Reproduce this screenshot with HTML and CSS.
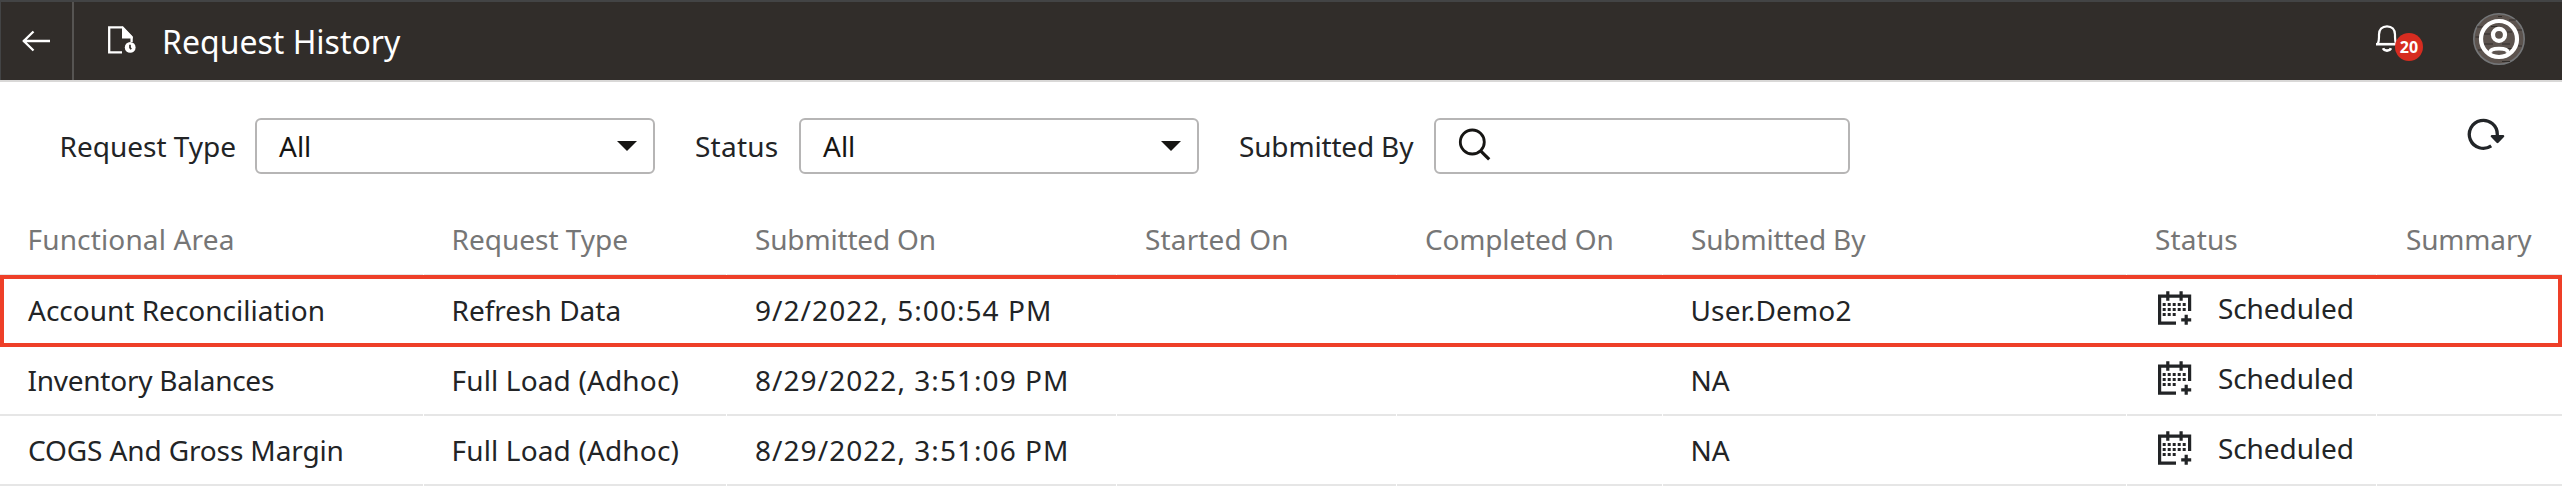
FILE: index.html
```html
<!DOCTYPE html>
<html lang="en">
<head>
<meta charset="utf-8">
<title>Request History</title>
<link rel="stylesheet" href="styles.css">
</head>
<body>
<svg width="0" height="0" class="defs" aria-hidden="true">
  <symbol id="calendar" viewBox="18 13 34 34">
    <g fill="none" stroke="currentColor" stroke-width="3.2">
      <path d="M36 45.2H19.6V18.2H49.6V33"/>
      <path d="M27.8 13.2v9.6M41.1 13.2v9.6"/>
      <path d="M46.2 36.8v10M41.2 41.8h10"/>
      <path stroke-width="3" stroke-dasharray="3 2" d="M22.7 26.5h23M22.7 31.5h23M22.7 36.5h13"/>
    </g>
  </symbol>
</svg>
<header class="topbar">
  <div class="back">
    <svg width="30" height="24" viewBox="0 0 30 24" fill="none" stroke="#fff" stroke-width="2.3"><path d="M29 12H2M12.5 2.5L2.8 12l9.7 9.5"/></svg>
  </div>
  <svg class="page-icon" width="30" height="30" viewBox="0 0 30 30">
    <path d="M15 27.3H2.2V2.4H15.500L24.6 12v5" fill="none" stroke="#fff" stroke-width="2.3"/>
    <path d="M15 1.300L25.700 12v1.500H15z" fill="#fff"/>
    <circle cx="23.200" cy="22.400" r="5.400" fill="#fff"/>
    <path d="M23 19.800v2.800l1.200 1.600" fill="none" stroke="#312d2a" stroke-width="1.700"/>
  </svg>
  <h1 class="title">Request History</h1>
  <div class="bell">
    <svg width="24" height="30" viewBox="0 0 24 30" fill="none" stroke="#fff" stroke-width="2.2">
      <path d="M1 20.200h22" stroke-width="2.600"/>
      <path d="M3 19.500c.8-2.200 1-3.800 1-6.500v-2.500C4 5.500 7 2.300 12 2.300s8 3.200 8 8.200V13c0 2.700.2 4.300 1 6.500"/>
      <path d="M8 24.300c.7 1.500 2.200 2.300 4 2.300s3.300-.8 4-2.300" stroke-width="2.600"/>
    </svg>
    <span class="badge">20</span>
  </div>
  <svg class="avatar" width="52" height="52" viewBox="0 0 52 52">
    <circle cx="26" cy="26" r="25.200" fill="#5c534e" stroke="#747678" stroke-width="1.600"/>
    <path d="M25 3.500h4M36 7h7M4 14h6M2.500 24h5M43 17h6M44 33h5M5 37h4M29 48.500h8M18 13.500h6M10 21h7M33 19h6M10 31h10M29 31h8M34 35.500h6" stroke="#312d2a" stroke-width="1.200"/>
    <g fill="none" stroke="#fff">
      <circle cx="26" cy="26" r="18" stroke-width="4.200"/>
      <circle cx="26" cy="21.800" r="6" stroke-width="4.200"/>
      <path d="M17.500 40c-.8-3.200 2.200-4.400 8.500-4.400s9.300 1.200 8.500 4.400" stroke-width="3.800"/>
    </g>
  </svg>
</header>

<section class="filters">
  <label class="label w-type">Request Type</label>
  <div class="box select">All<i class="caret"></i></div>
  <label class="label w-status">Status</label>
  <div class="box select">All<i class="caret"></i></div>
  <label class="label w-by tight">Submitted By</label>
  <div class="box search">
    <svg width="36" height="36" viewBox="0 0 36 36" fill="none" stroke="#161513" stroke-width="2.800"><circle cx="15.300" cy="15" r="12"/><path d="M23.600 23.800l8.600 8.600" stroke-width="3.200"/></svg>
  </div>
  <svg class="refresh" width="40" height="36" viewBox="0 0 40 36">
    <path d="M24.200 28.900A14 14 0 1 1 30.300 17.500V22" fill="none" stroke="#222528" stroke-width="3.300"/>
    <path d="M25 19.200l5.500 5.600 5.500-5.600z" fill="#222528" stroke="#222528" stroke-width="2.600" stroke-linejoin="round"/>
  </svg>
</section>

<main class="table">
  <div class="row head">
    <div class="cell stem wide">Functional Area</div><div class="cell stem">Request Type</div><div class="cell tight">Submitted On</div><div class="cell wide">Started On</div><div class="cell tight">Completed On</div><div class="cell tight">Submitted By</div><div class="cell wide">Status</div><div class="cell tight last">Summary</div>
  </div>
  <div class="row selected">
    <div class="cell">Account Reconciliation</div><div class="cell stem">Refresh Data</div><div class="cell date">9/2/2022, 5:00:54 PM</div><div class="cell"></div><div class="cell"></div><div class="cell stem wide">User.Demo2</div><div class="cell status"><svg width="34" height="34"><use href="#calendar"/></svg>Scheduled</div><div class="cell"></div>
  </div>
  <div class="row">
    <div class="cell stem tighter">Inventory Balances</div><div class="cell stem wide">Full Load (Adhoc)</div><div class="cell date">8/29/2022, 3:51:09 PM</div><div class="cell"></div><div class="cell"></div><div class="cell stem">NA</div><div class="cell status"><svg width="34" height="34"><use href="#calendar"/></svg>Scheduled</div><div class="cell"></div>
  </div>
  <div class="row">
    <div class="cell cogs">COGS And Gross Margin</div><div class="cell stem wide">Full Load (Adhoc)</div><div class="cell date">8/29/2022, 3:51:06 PM</div><div class="cell"></div><div class="cell"></div><div class="cell stem">NA</div><div class="cell status"><svg width="34" height="34"><use href="#calendar"/></svg>Scheduled</div><div class="cell"></div>
  </div>
</main>
</body>
</html>
```
FILE: styles.css
```css
* { box-sizing: border-box; }
body {
  margin: 0;
  background: #fff;
  color: #222426;
  font: 28px/38px "Noto Sans", "Open Sans", sans-serif;
  overflow: hidden;
}
svg { display: block; flex: none; }
.defs { position: absolute; }

.topbar {
  display: flex;
  align-items: flex-start;
  height: 82px;
  background: #312d2a;
  border-top: 2px solid #434445;
  border-bottom: 2px solid #d9d8d7;
}
.back {
  width: 74px;
  height: 78px;
  padding: 27px 0 0 20px;
  border-left: 1px solid #434445;
  border-right: 2px solid #565452;
}
.page-icon { margin: 23px 0 0 33px; }
.title {
  margin: 18px 0 0 25px;
  font-size: 32px;
  line-height: 44px;
  font-weight: 400;
  color: #fff;
}
.bell {
  position: relative;
  margin: 22px 0 0 auto;
}
.badge {
  position: absolute;
  left: 20px;
  top: 9px;
  width: 28px;
  height: 28px;
  border-radius: 50%;
  background: #d62c20;
  color: #fff;
  font-size: 16px;
  line-height: 28px;
  font-weight: 700;
  text-align: center;
}
.avatar { margin: 11px 37px 0 74px; }

.filters {
  display: flex;
  align-items: center;
  height: 56px;
  margin-top: 36px;
  padding-left: 58px;
}
.label { flex: none; white-space: nowrap; }
.w-type { width: 197px; padding-left: 1.5px; }
.w-status { width: 144px; padding-left: 40px; letter-spacing: .25px; }
.w-by { width: 235px; padding-left: 40px; }
.box {
  display: flex;
  align-items: center;
  flex: none;
  height: 56px;
  width: 400px;
  border: 2px solid #b6b5b5;
  border-radius: 6px;
  color: #161513;
}
.select { justify-content: space-between; padding: 0 16px 0 22px; }
.caret {
  border: 10px solid transparent;
  border-top: 10.500px solid #161513;
  border-bottom: 0;
}
.search { width: 416px; padding: 0 0 3px 21px; }
.refresh { margin: -22px 55px 0 auto; }

.table { margin-top: 30px; }
.row {
  position: relative;
  display: grid;
  grid-template-columns: 423px 302px 389px 279px 265px 463px 249px 185px;
  column-gap: 1px;
  height: 70px;
}
.head { height: 72px; color: #767676; }
.cell {
  display: flex;
  align-items: center;
  padding-left: 28px;
  border-bottom: 2px solid #e6e6e6;
  white-space: nowrap;
}
.head .cell { padding-bottom: 1px; }
.stem { padding-left: 27.500px; }
.wide { letter-spacing: .15px; }
.tight { letter-spacing: -.17px; }
.tighter { letter-spacing: -.25px; }
.cogs { padding-left: 28px; letter-spacing: -.12px; }
.date { letter-spacing: 1.050px; }
.last { padding-left: 29px; }
.status { gap: 26px; padding-left: 31px; padding-bottom: 4px; letter-spacing: -.1px; }
.selected::after {
  content: "";
  position: absolute;
  inset: -1px 0;
  border: 4px solid #ee3f28;
}
```
